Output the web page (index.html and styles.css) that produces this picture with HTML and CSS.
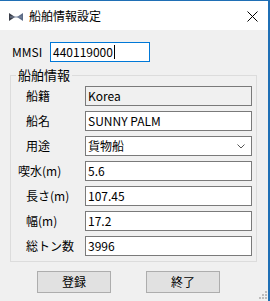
FILE: index.html
```html
<!DOCTYPE html>
<html lang="ja">
<head>
  <meta charset="UTF-8" />
  <title>船舶情報設定</title>
  <link rel="stylesheet" href="styles.css">
</head>
<body>
  <div class="window">
    <div class="titlebar">
      <svg class="app-icon" width="14" height="8" viewBox="0 0 14 8">
        <path d="M0 0 L6 4 L0 8 Z" fill="#3a3f4a"/>
        <path d="M14 0 L8 4 L14 8 Z" fill="#5b6b86"/>
        <path d="M1 4 H13" stroke="#7f8ba3" stroke-width="1"/>
      </svg>
      <span class="title">船舶情報設定</span>
      <svg class="close" width="11" height="11" viewBox="0 0 11 11">
        <path d="M0.5 0.5 L10.5 10.5 M10.5 0.5 L0.5 10.5" stroke="#000" stroke-width="1"/>
      </svg>
    </div>

    <div class="content">
      <div class="mmsi-row">
        <span class="mmsi-label">MMSI</span>
        <div class="textbox focused">440119000<span class="caret"></span></div>
      </div>

      <fieldset class="group">
        <legend>船舶情報</legend>
        <div class="field">
          <span class="label">船籍</span>
          <div class="textbox readonly">Korea</div>
        </div>
        <div class="field">
          <span class="label">船名</span>
          <div class="textbox">SUNNY PALM</div>
        </div>
        <div class="field">
          <span class="label">用途</span>
          <div class="textbox combo">
            <span>貨物船</span>
            <svg class="chevron" width="8" height="5" viewBox="0 0 8 5">
              <path d="M0.5 0.5 L4 4 L7.5 0.5" fill="none" stroke="#555" stroke-width="1"/>
            </svg>
          </div>
        </div>
        <div class="field">
          <span class="label label-wide">喫水(m)</span>
          <div class="textbox">5.6</div>
        </div>
        <div class="field">
          <span class="label">長さ(m)</span>
          <div class="textbox">107.45</div>
        </div>
        <div class="field">
          <span class="label">幅(m)</span>
          <div class="textbox">17.2</div>
        </div>
        <div class="field">
          <span class="label">総トン数</span>
          <div class="textbox">3996</div>
        </div>
      </fieldset>

      <div class="buttons">
        <button class="btn">登録</button>
        <button class="btn">終了</button>
      </div>
    </div>

    <svg class="grip" width="8" height="8" viewBox="0 0 8 8">
      <rect x="6" y="0" width="2" height="2" fill="#bcbcbc"/>
      <rect x="3" y="3" width="2" height="2" fill="#bcbcbc"/>
      <rect x="6" y="3" width="2" height="2" fill="#bcbcbc"/>
      <rect x="0" y="6" width="2" height="2" fill="#bcbcbc"/>
      <rect x="3" y="6" width="2" height="2" fill="#bcbcbc"/>
      <rect x="6" y="6" width="2" height="2" fill="#bcbcbc"/>
    </svg>
  </div>
</body>
</html>
```

FILE: styles.css
```css
body {
  margin: 0;
  background: #f0f0f0;
  font-family: "Noto Sans CJK JP", "Liberation Sans", sans-serif;
  font-size: 12px;
  color: #000;
}

.window {
  position: relative;
  width: 268px;
  height: 300px;
  border-top: 1px solid #1f6fb5;
  border-right: 2px solid #1f6fb5;
  background: #f0f0f0;
}

.titlebar {
  display: flex;
  align-items: center;
  height: 29px;
  background: #fff;
  padding-left: 9px;
  box-sizing: border-box;
}

.app-icon { margin-top: 2px; }

.title {
  margin-left: 6px;
  line-height: 14px;
  margin-top: 1px;
}

.close {
  margin-left: auto;
  margin-right: 10px;
  margin-top: 1px;
}

.content {
  padding: 12px 0 0 10px;
}

.mmsi-row {
  display: flex;
  align-items: center;
  padding-left: 2px;
}

.mmsi-label {
  width: 38px;
  line-height: 14px;
}

.textbox {
  display: flex;
  align-items: center;
  box-sizing: border-box;
  width: 167px;
  height: 20px;
  padding: 0 2px;
  border: 1px solid #7a7a7a;
  background: #fff;
  line-height: 14px;
  white-space: nowrap;
}

.textbox.focused {
  width: 100px;
  border-color: #0078d7;
}

.textbox.readonly {
  background: #f0f0f0;
}

.caret {
  display: inline-block;
  width: 1px;
  height: 14px;
  margin-left: 1px;
  background: #000;
}

.combo {
  justify-content: space-between;
  padding-right: 6px;
}

.chevron { margin-top: 1px; }

.group {
  width: 247px;
  box-sizing: border-box;
  margin: 6px 0 0 0;
  padding: 4px 4px 5px 5px;
  border: 1px solid #dcdcdc;
  display: flex;
  flex-direction: column;
  gap: 5px;
}

.group legend {
  padding: 0 2px;
  line-height: 14px;
  font-size: 13px;
}

.field {
  display: flex;
  align-items: center;
}

.label {
  width: 59px;
  padding-left: 10px;
  line-height: 14px;
}

.label-wide {
  width: 67px;
  padding-left: 2px;
}

.buttons {
  display: flex;
  gap: 35px;
  margin: 9px 0 0 27px;
}

.btn {
  width: 74px;
  height: 22px;
  padding: 0;
  border: 1px solid #adadad;
  background: #e1e1e1;
  font-family: inherit;
  font-size: 12px;
  line-height: 14px;
  color: #000;
}

.grip {
  position: absolute;
  right: 1px;
  bottom: 2px;
}
```
